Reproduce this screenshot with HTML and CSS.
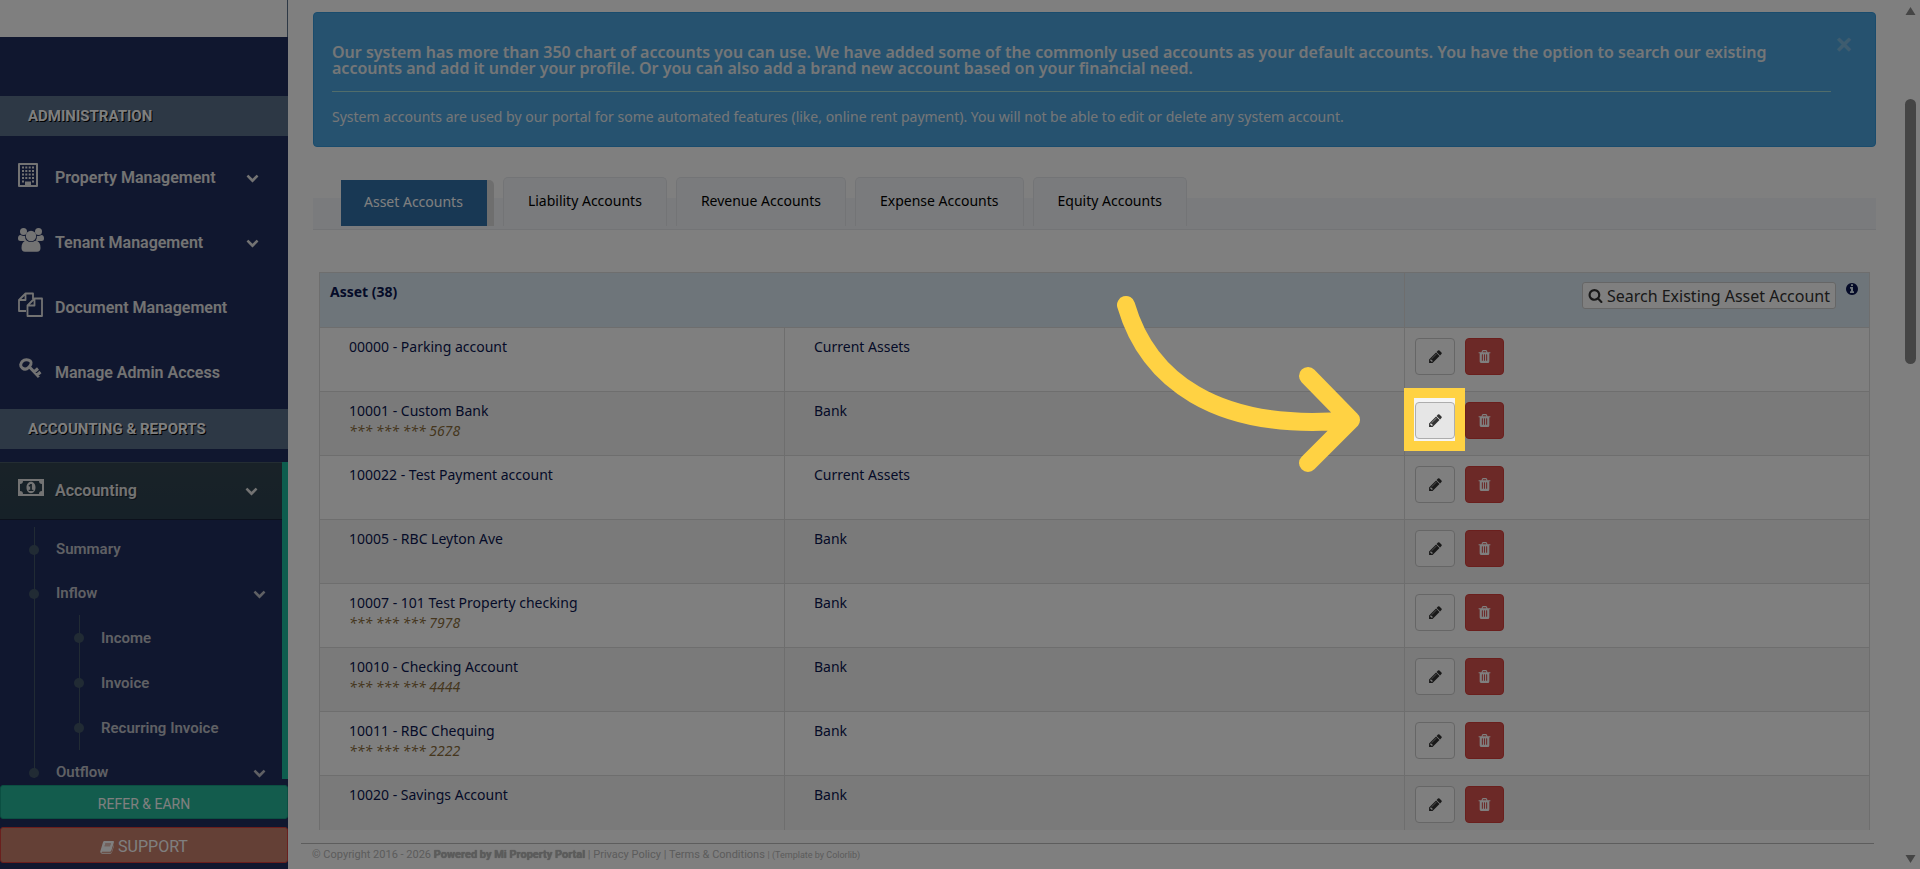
FILE: index.html
```html
<!DOCTYPE html>
<html lang="en">
<head>
  <meta charset="UTF-8">
  <meta name="viewport" content="width=device-width, initial-scale=1.0">
  <title>Chart of Accounts</title>
  <link rel="stylesheet" href="styles.css">
</head>
<body>
  <!-- shared icons -->
  <svg class="icon-defs" aria-hidden="true">
    <symbol id="i-pencil" viewBox="0 0 1792 1792"><path d="M491 1536l91-91-235-235-91 91v107h128v128h107zm523-928q0-22-22-22-10 0-17 7l-542 542q-7 7-7 17 0 22 22 22 10 0 17-7l542-542q7-7 7-17zm-54-192l416 416-832 832h-416v-416zm683 96q0 53-37 90l-166 166-416-416 166-165q36-38 90-38 53 0 91 38l235 234q37 39 37 91z"/></symbol>
    <symbol id="i-trash" viewBox="0 0 1792 1792"><path d="M704 1376v-704q0-14-9-23t-23-9h-64q-14 0-23 9t-9 23v704q0 14 9 23t23 9h64q14 0 23-9t9-23zm256 0v-704q0-14-9-23t-23-9h-64q-14 0-23 9t-9 23v704q0 14 9 23t23 9h64q14 0 23-9t9-23zm256 0v-704q0-14-9-23t-23-9h-64q-14 0-23 9t-9 23v704q0 14 9 23t23 9h64q14 0 23-9t9-23zm-544-992h448l-48-117q-7-9-17-11h-317q-10 2-17 11zm928 32v64q0 14-9 23t-23 9h-96v948q0 83-47 143.5t-113 60.5h-832q-66 0-113-58.5t-47-141.5v-952h-96q-14 0-23-9t-9-23v-64q0-14 9-23t23-9h309l70-167q15-37 54-63t79-26h320q40 0 79 26t54 63l70 167h309q14 0 23 9t9 23z"/></symbol>
    <symbol id="i-search" viewBox="0 0 1792 1792"><path d="M1216 832q0-185-131.5-316.5t-316.5-131.5-316.5 131.5-131.5 316.5 131.5 316.5 316.5 131.5 316.5-131.5 131.5-316.5zm512 832q0 52-38 90t-90 38q-54 0-90-38l-343-342q-179 124-399 124-143 0-273.5-55.5t-225-150-150-225-55.5-273.5 55.5-273.5 150-225 225-150 273.5-55.5 273.5 55.5 225 150 150 225 55.5 273.5q0 220-124 399l343 343q37 37 37 90z"/></symbol>
    <symbol id="i-info" viewBox="0 0 1792 1792"><path d="M1152 1376v-160q0-14-9-23t-23-9h-96v-512q0-14-9-23t-23-9h-320q-14 0-23 9t-9 23v160q0 14 9 23t23 9h96v320h-96q-14 0-23 9t-9 23v160q0 14 9 23t23 9h448q14 0 23-9t9-23zm-128-896v-160q0-14-9-23t-23-9h-192q-14 0-23 9t-9 23v160q0 14 9 23t23 9h192q14 0 23-9t9-23zm640 416q0 209-103 385.5t-279.5 279.5-385.5 103-385.5-103-279.5-279.5-103-385.5 103-385.5 279.5-279.5 385.5-103 385.5 103 279.5 279.5 103 385.5z"/></symbol>
    <symbol id="i-down" viewBox="0 0 1792 1792"><path d="M1683 808l-742 741q-19 19-45 19t-45-19l-742-741q-19-19-19-45.5t19-45.5l166-165q19-19 45-19t45 19l531 531 531-531q19-19 45-19t45 19l166 165q19 19 19 45.5t-19 45.5z"/></symbol>
    <symbol id="i-building" viewBox="0 0 26 26"><path fill-rule="evenodd" d="M1 1h18q1 0 1 1v22q0 1-1 1H1q-1 0-1-1V2q0-1 1-1zm1 2v20h5v-3.500h6V23h5V3z"/><path d="M4 4.500h2v2H4zm3.300 0h2v2h-2zm3.400 0h2v2h-2zm3.300 0h2v2h-2zM4 8h2v2H4zm3.300 0h2v2h-2zm3.400 0h2v2h-2zM14 8h2v2h-2zM4 11.500h2v2H4zm3.300 0h2v2h-2zm3.400 0h2v2h-2zm3.300 0h2v2h-2zM4 15h2v2H4zm3.300 0h2v2h-2zm3.400 0h2v2h-2zm3.300 0h2v2h-2zM4 18.500h2v2H4zm10 0h2v2h-2z"/></symbol>
    <symbol id="i-group" viewBox="0 0 26 26"><circle cx="5.500" cy="4.500" r="3.500"/><circle cx="20.500" cy="4.500" r="3.500"/><circle cx="13" cy="9" r="5.200"/><path d="M2.500 8q3 1.500 4.500.8Q6.800 12 9 14H2.500Q0 14 0 11.500 0 8 2.500 8zM23.500 8q-3 1.500-4.500.8.200 3.200-2 5.200h6.500q2.500 0 2.500-2.500Q26 8 23.500 8zM8.500 13.500q4.500 3 9 0 5 .5 5 7.500 0 3.700-3.500 3.700H7q-3.500 0-3.500-3.700 0-7 5-7.500z"/></symbol>
    <symbol id="i-copy" viewBox="0 0 26 26"><path fill="none" stroke="currentColor" stroke-width="1.800" stroke-linejoin="round" d="M8 19H1V8l6.500-6.500H15V7M7.500 1.500V8H1M16.500 6.500H24V24H9.500V13.500zM16.500 6.500v7h-7"/></symbol>
    <symbol id="i-key" viewBox="0 0 26 26"><path fill="none" stroke="currentColor" stroke-width="3" d="M12.500 4.200c1.700 1.700 0 4.500-1.800 6.200s-4.400 2.300-6.400.6C1.700 9 2.500 6.500 4.500 4.300s6-2 8-.1zM11 9.500L21 20M16 15l4-3.500M19 18l3.500-3"/></symbol>
    <symbol id="i-money" viewBox="0 0 26 26"><path fill-rule="evenodd" d="M0 4h26v17H0zm5 2q0 3-3 3v7q3 0 3 3h16q0-3 3-3V9q-3 0-3-3zm8 .8c2.600 0 4.500 2.600 4.500 5.700s-1.900 5.700-4.500 5.700-4.500-2.600-4.500-5.700 1.900-5.700 4.500-5.700zm-.6 2.200l-2 1.700.9 1 .9-.7v3.800h-1.500v1.300h4.700v-1.300h-1.500V9z"/></symbol>
    <symbol id="i-book" viewBox="0 0 16 16"><path fill-rule="evenodd" d="M5 1h10q1.300.3.900 1.600l-3 9.600q-.4 1.300-1.700 1.300H2.500q-.9 0-.7.7.2.500 1 .500h9.400q.8 0 1-.8L16 5q.4 1-.1 2.200l-2.300 7.200q-.5 1.300-1.800 1.300H2.300Q0 15.500.3 13L3.500 2.300Q3.900 1 5 1zm1 3l-.3 1h6.600l.3-1zm-.7 2.200l-.3 1h6.600l.3-1z"/></symbol>
  </svg>

  <div class="layout">
    <aside class="sidebar">
      <div class="brand"></div>
      <nav class="menu">
        <h3 class="menu-title">ADMINISTRATION</h3>
        <ul class="menu-list">
          <li><a href="#"><svg class="menu-icon"><use href="#i-building"/></svg>Property Management<svg class="chevron"><use href="#i-down"/></svg></a></li>
          <li><a href="#"><svg class="menu-icon"><use href="#i-group"/></svg>Tenant Management<svg class="chevron"><use href="#i-down"/></svg></a></li>
          <li><a href="#"><svg class="menu-icon"><use href="#i-copy"/></svg>Document Management</a></li>
          <li><a href="#"><svg class="menu-icon"><use href="#i-key"/></svg>Manage Admin Access</a></li>
        </ul>
        <h3 class="menu-title">ACCOUNTING &amp; REPORTS</h3>
        <div class="menu-active">
          <a class="active-link" href="#"><svg class="menu-icon"><use href="#i-money"/></svg>Accounting<svg class="chevron"><use href="#i-down"/></svg></a>
          <ul class="submenu">
            <li><a href="#">Summary</a></li>
            <li><a href="#">Inflow<svg class="chevron"><use href="#i-down"/></svg></a>
              <ul class="submenu-inner">
                <li><a href="#">Income</a></li>
                <li><a href="#">Invoice</a></li>
                <li><a href="#">Recurring Invoice</a></li>
              </ul>
            </li>
            <li><a href="#">Outflow<svg class="chevron"><use href="#i-down"/></svg></a></li>
          </ul>
        </div>
      </nav>
      <div class="sidebar-footer">
        <button type="button" class="btn-refer">REFER &amp; EARN</button>
        <button type="button" class="btn-support"><svg class="book-icon"><use href="#i-book"/></svg>SUPPORT</button>
      </div>
    </aside>

    <main class="content">
      <div class="content-body">
        <div class="alert">
          <button type="button" class="close" aria-label="Close">×</button>
          <h4>Our system has more than 350 chart of accounts you can use. We have added some of the commonly used accounts as your default accounts. You have the option to search our existing accounts and add it under your profile. Or you can also add a brand new account based on your financial need.</h4>
          <hr>
          <p>System accounts are used by our portal for some automated features (like, online rent payment). You will not be able to edit or delete any system account.</p>
        </div>

        <div class="tabs">
          <a class="tab tab-active" href="#"><span>Asset Accounts</span></a>
          <a class="tab" href="#">Liability Accounts</a>
          <a class="tab" href="#">Revenue Accounts</a>
          <a class="tab" href="#">Expense Accounts</a>
          <a class="tab" href="#">Equity Accounts</a>
        </div>

        <table class="accounts">
          <colgroup>
            <col class="col-name">
            <col class="col-type">
            <col class="col-actions">
          </colgroup>
          <thead>
            <tr>
              <th colspan="2">Asset (38)</th>
              <th>
                <div class="head-tools">
                  <button type="button" class="btn-search"><svg><use href="#i-search"/></svg>Search Existing Asset Account</button>
                  <svg class="info"><use href="#i-info"/></svg>
                </div>
              </th>
            </tr>
          </thead>
          <tbody>
            <tr>
              <td>00000 - Parking account</td>
              <td>Current Assets</td>
              <td><div class="actions"><button type="button" class="btn-edit" aria-label="Edit"><svg><use href="#i-pencil"/></svg></button><button type="button" class="btn-delete" aria-label="Delete"><svg><use href="#i-trash"/></svg></button></div></td>
            </tr>
            <tr>
              <td>10001 - Custom Bank<em>*** *** *** 5678</em></td>
              <td>Bank</td>
              <td><div class="actions"><button type="button" class="btn-edit hover" aria-label="Edit"><svg><use href="#i-pencil"/></svg></button><button type="button" class="btn-delete" aria-label="Delete"><svg><use href="#i-trash"/></svg></button></div></td>
            </tr>
            <tr>
              <td>100022 - Test Payment account</td>
              <td>Current Assets</td>
              <td><div class="actions"><button type="button" class="btn-edit" aria-label="Edit"><svg><use href="#i-pencil"/></svg></button><button type="button" class="btn-delete" aria-label="Delete"><svg><use href="#i-trash"/></svg></button></div></td>
            </tr>
            <tr>
              <td>10005 - RBC Leyton Ave</td>
              <td>Bank</td>
              <td><div class="actions"><button type="button" class="btn-edit" aria-label="Edit"><svg><use href="#i-pencil"/></svg></button><button type="button" class="btn-delete" aria-label="Delete"><svg><use href="#i-trash"/></svg></button></div></td>
            </tr>
            <tr>
              <td>10007 - 101 Test Property checking<em>*** *** *** 7978</em></td>
              <td>Bank</td>
              <td><div class="actions"><button type="button" class="btn-edit" aria-label="Edit"><svg><use href="#i-pencil"/></svg></button><button type="button" class="btn-delete" aria-label="Delete"><svg><use href="#i-trash"/></svg></button></div></td>
            </tr>
            <tr>
              <td>10010 - Checking Account<em>*** *** *** 4444</em></td>
              <td>Bank</td>
              <td><div class="actions"><button type="button" class="btn-edit" aria-label="Edit"><svg><use href="#i-pencil"/></svg></button><button type="button" class="btn-delete" aria-label="Delete"><svg><use href="#i-trash"/></svg></button></div></td>
            </tr>
            <tr>
              <td>10011 - RBC Chequing<em>*** *** *** 2222</em></td>
              <td>Bank</td>
              <td><div class="actions"><button type="button" class="btn-edit" aria-label="Edit"><svg><use href="#i-pencil"/></svg></button><button type="button" class="btn-delete" aria-label="Delete"><svg><use href="#i-trash"/></svg></button></div></td>
            </tr>
            <tr>
              <td>10020 - Savings Account</td>
              <td>Bank</td>
              <td><div class="actions"><button type="button" class="btn-edit" aria-label="Edit"><svg><use href="#i-pencil"/></svg></button><button type="button" class="btn-delete" aria-label="Delete"><svg><use href="#i-trash"/></svg></button></div></td>
            </tr>
          </tbody>
        </table>
      </div>

      <footer class="footer">
        © Copyright 2016 - 2026 <b>Powered by Mi Property Portal</b> | <a href="#">Privacy Policy</a> | <a href="#">Terms &amp; Conditions</a> <small>| (Template by <a href="#">Colorlib</a>)</small>
      </footer>
    </main>

    <div class="scrollbar">
      <svg class="scroll-arrow" viewBox="0 0 12 10"><path d="M6 1l5 8H1z"/></svg>
      <div class="scroll-thumb"></div>
      <svg class="scroll-arrow" viewBox="0 0 12 10"><path d="M6 9l5-8H1z"/></svg>
    </div>
  </div>

  <!-- guide overlay: dims the page around the edit button -->
  <div class="spotlight"></div>
  <svg class="guide-arrow" viewBox="0 0 246 180">
    <path d="M11 10C32 82 98 138 236 125M193 81l43 44-43 43"/>
  </svg>
</body>
</html>
```
FILE: styles.css
```css
* {
  box-sizing: border-box;
}
body {
  margin: 0;
  background: #fff;
  font-family: "Noto Sans", sans-serif;
  font-size: 14px;
  line-height: 20px;
  overflow: hidden;
}
a {
  color: inherit;
  text-decoration: none;
}
ul {
  list-style: none;
  margin: 0;
  padding: 0;
}
svg {
  fill: currentColor;
  flex: none;
}
button {
  font-family: inherit;
  padding: 0;
}
.icon-defs {
  display: none;
}
.layout {
  display: flex;
  height: 100vh;
}

/* sidebar */
.sidebar {
  display: flex;
  flex-direction: column;
  flex: none;
  width: 288px;
  background: #202e5e;
  color: #e7e7e7;
  font-family: Roboto, sans-serif;
  font-weight: 600;
}
.brand {
  flex: none;
  height: 37px;
  background: #fff;
  border-right: 1px solid #5b708b;
}
.menu {
  flex: 1;
  padding-top: 59px;
}
.menu-title {
  margin: 0;
  padding-left: 28px;
  background: #5b708b;
  color: #fff;
  font-size: 15px;
  font-weight: 700;
  line-height: 40px;
  text-shadow: 1px 1px #000;
}
.menu-list {
  padding: 9px 0 4px;
}
.menu-list a,
.active-link {
  display: flex;
  align-items: center;
  height: 65px;
  padding: 0 29px 0 18px;
  font-size: 16px;
}
.menu-icon {
  width: 26px;
  height: 26px;
  margin: 0 11px 6px 0;
}
.chevron {
  width: 13px;
  height: 13px;
  margin-left: auto;
}
.menu-active {
  margin-top: 13px;
  border-right: 6px solid #1abb9c;
}
.active-link {
  height: 57px;
  padding-right: 24px;
  background: linear-gradient(#334550, #2c4250);
  box-shadow: inset 0 1px #485a66, 0 1px #182238;
  text-shadow: 1px 1px #1a2430;
}
.submenu {
  height: 260px;
  padding-top: 8px;
  color: #bfc0c8;
  font-size: 15px;
  line-height: 14px;
}
.submenu li {
  position: relative;
}
.submenu a {
  display: flex;
  align-items: center;
  height: 44px;
  padding: 0 16px 0 56px;
}
.submenu-inner a {
  height: 45px;
  padding-left: 101px;
}
.submenu > li:last-child {
  height: 28px;
}
/* tree line and dots */
.submenu li::before {
  content: "";
  position: absolute;
  left: 29px;
  top: 18px;
  width: 10px;
  height: 10px;
  border-radius: 50%;
  background: #425668;
}
.submenu li::after {
  content: "";
  position: absolute;
  left: 34px;
  top: 0;
  bottom: 0;
  width: 1px;
  background: #425668;
}
.submenu .submenu-inner li::before {
  left: 74px;
}
.submenu .submenu-inner li::after {
  left: 79px;
}
.sidebar-footer {
  display: flex;
  flex-direction: column;
  gap: 8px;
  padding: 6px 0;
}
.sidebar-footer button {
  display: flex;
  align-items: center;
  justify-content: center;
  gap: 4px;
  padding-top: 3px;
  border: 1px solid #169f85;
  border-radius: 3px;
  color: #fff;
}
.sidebar-footer .btn-refer {
  height: 34px;
  background: #26b99a;
  font-size: 14px;
}
.sidebar-footer .btn-support {
  height: 36px;
  background: #c8806c;
  border-color: #d43f3a;
  font-size: 16px;
}
.book-icon {
  width: 14px;
  height: 14px;
}

/* content */
.content {
  display: flex;
  flex-direction: column;
  flex: 1;
  min-width: 0;
  padding: 12px 25px 0 13px;
}
.content-body {
  flex: 1;
  min-height: 0;
  padding: 0 0 0 12px;
  overflow: hidden;
}
.alert {
  position: relative;
  padding: 31px 44px 19px 18px;
  background: #4ca4df;
  border: 1px solid #3498db;
  border-radius: 4px;
  color: #e9edef;
}
.alert h4 {
  margin: 0;
  font-size: 16px;
  font-weight: 600;
  line-height: 16px;
}
.alert hr {
  margin: 15px 0;
  border: 0;
  border-top: 1px solid #a3dbd6;
}
.alert p {
  margin: 0;
}
.close {
  position: absolute;
  top: 19px;
  right: 22px;
  background: none;
  border: 0;
  color: #7cb9df;
  font-size: 32px;
  font-weight: 700;
  line-height: 24px;
}
.tabs {
  display: flex;
  gap: 9px;
  margin-top: 30px;
  padding: 0 28px 3px;
  background: linear-gradient(transparent 21px, #f5f7fa 21px);
  border-bottom: 1px solid #e6e9ed;
}
.tab {
  padding: 13px 24px 14px;
  background: #f5f7fa;
  border: 1px solid #e6e9ed;
  border-bottom: 0;
  border-radius: 5px 5px 0 0;
  color: #000;
}
.tab-active {
  display: flex;
  margin-top: 3px;
  padding: 0 7px 0 0;
  background: #ddd;
  border: 0;
  color: #fff;
}
.tab-active span {
  padding: 12px 24px 14px 23px;
  background: #3071a9;
}
.accounts {
  width: calc(100% - 12px);
  margin: 42px 6px 0;
  border-collapse: collapse;
  table-layout: fixed;
  color: #0a1650;
}
.col-name {
  width: 30%;
}
.col-type {
  width: 40%;
}
.accounts th,
.accounts td {
  height: 64px;
  padding: 9px 29px;
  border: 1px solid #ddd;
  text-align: left;
  vertical-align: top;
}
.accounts th {
  height: 55px;
  padding: 9px 10px;
  background: #dcebf5;
}
.accounts td:last-child {
  padding: 10px;
}
.accounts tbody tr:nth-child(even) {
  background: #f5f5f5;
}
.accounts em {
  display: block;
  color: #8a6d3b;
}
.head-tools {
  display: flex;
  justify-content: flex-end;
  gap: 9px;
}
.btn-search {
  display: flex;
  align-items: center;
  gap: 4px;
  height: 27px;
  padding: 0 5px;
  background: #fff;
  border: 1px solid #ccc;
  border-radius: 3px;
  color: #333;
  font-size: 16px;
}
.btn-search svg {
  width: 15px;
  height: 15px;
}
.info {
  width: 14px;
  height: 14px;
}
.actions {
  display: flex;
  gap: 10px;
}
.actions button {
  display: flex;
  align-items: center;
  justify-content: center;
  height: 37px;
  border: 1px solid #ccc;
  border-radius: 4px;
}
.actions svg {
  width: 15px;
  height: 15px;
}
.btn-edit {
  width: 40px;
  background: #fff;
  color: #333;
}
.actions .hover {
  background: #e6e6e6;
  border-color: #adadad;
}
.actions .btn-delete {
  width: 39px;
  background: #d9534f;
  border-color: #d43f3a;
  color: #fff;
}
.footer {
  margin: 13px 2px 0 0;
  padding: 1px 11px 4px;
  border-top: 1px solid #bbb;
  color: #b8b8b8;
  font-family: Roboto, sans-serif;
  font-size: 11px;
}
.footer b {
  text-shadow: 0 0 1px #999;
}
.footer small {
  font-size: 9px;
}

/* scrollbar */
.scrollbar {
  display: flex;
  flex-direction: column;
  justify-content: space-between;
  align-items: center;
  width: 19px;
  padding: 6px 0 5px;
  color: #8b8b8b;
}
.scroll-arrow {
  width: 13px;
  height: 10px;
}
.scroll-thumb {
  width: 11px;
  height: 265px;
  margin: 83px 0 auto;
  border-radius: 6px;
  background: #8b8b8b;
}

/* guide overlay */
.spotlight {
  position: absolute;
  left: 1404px;
  top: 388px;
  width: 61px;
  height: 63px;
  border: 10px solid #ffd243;
  box-shadow: 0 0 0 2000px rgba(0, 0, 0, 0.5);
}
.guide-arrow {
  position: absolute;
  left: 1115px;
  top: 295px;
  width: 246px;
  height: 180px;
  fill: none;
  stroke: #ffd243;
  stroke-width: 18;
  stroke-linecap: round;
  stroke-linejoin: round;
}
```
